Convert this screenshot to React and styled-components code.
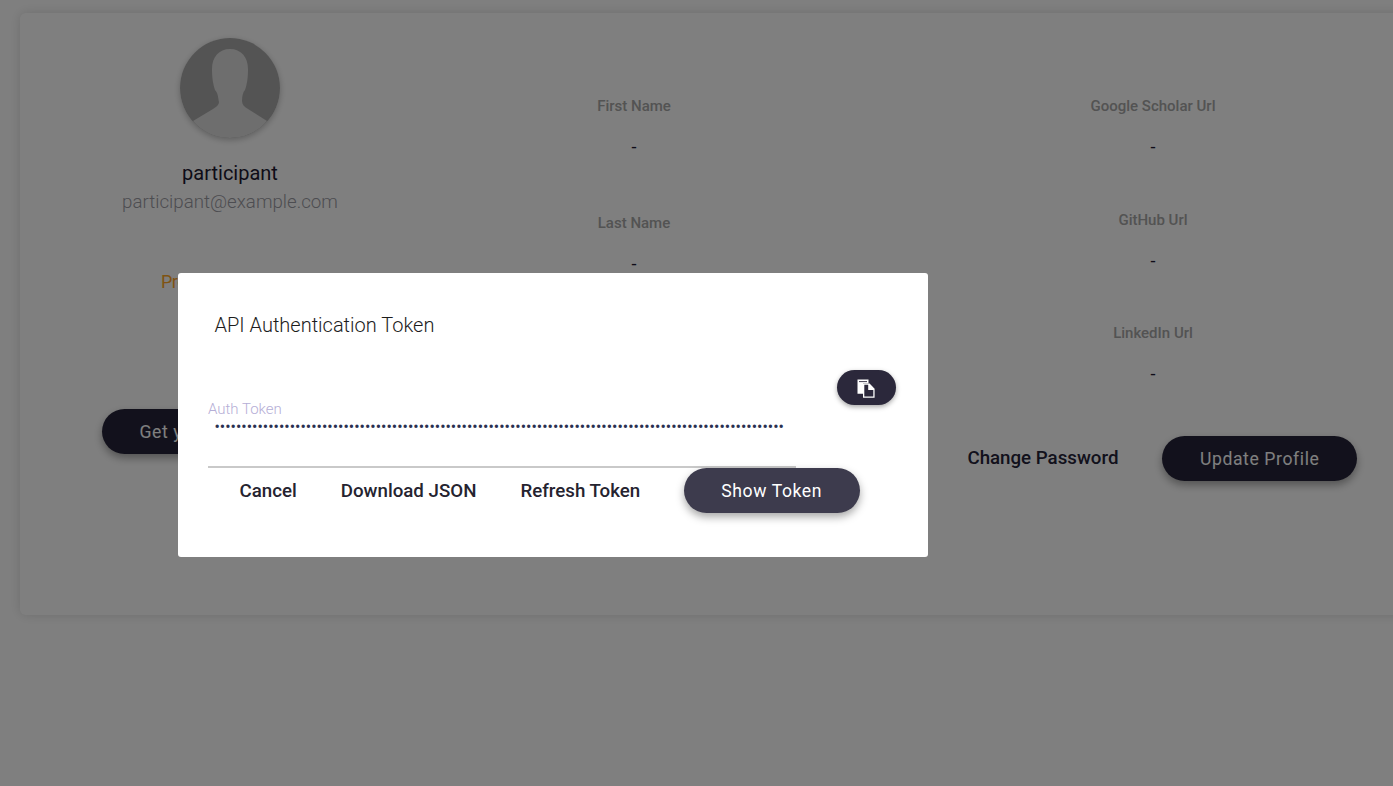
import React from 'react';
import styled, { createGlobalStyle } from 'styled-components';

const GlobalStyle = createGlobalStyle`
  html, body {
    margin: 0;
    padding: 0;
    height: 100%;
    overflow: hidden;
    background: #fff;
    font-family: Roboto, "Liberation Sans", sans-serif;
  }
`;

const Page = styled.div`
  width: 1393px;
  height: 786px;
  overflow: hidden;
  padding: 13px 0 0 20px;
  box-sizing: border-box;
`;

const ProfileCard = styled.div`
  width: 1420px;
  height: 602px;
  background: #fff;
  border-radius: 6px;
  box-shadow: 0 0 12px rgba(0, 0, 0, 0.14);
  display: grid;
  grid-template-columns: 420px 388px 540px;
`;

const UserColumn = styled.div`
  display: flex;
  flex-direction: column;
  align-items: center;
  padding-top: 25px;
`;

const Avatar = styled.div`
  width: 100px;
  height: 100px;
  border-radius: 50%;
  overflow: hidden;
  box-shadow: 0 2px 6px rgba(0, 0, 0, 0.25);
  svg {
    display: block;
  }
`;

const UserName = styled.div`
  margin-top: 23px;
  font-size: 20px;
  line-height: 24px;
  color: #1c1830;
`;

const UserEmail = styled.div`
  margin-top: 5px;
  font-size: 18.72px;
  line-height: 24px;
  font-weight: 300;
  color: #9a9aa2;
`;

const Status = styled.div`
  margin-top: 56px;
  font-size: 18px;
  line-height: 24px;
  letter-spacing: -0.45px;
  color: #ffa726;
`;

const PillButton = styled.button`
  border: 0;
  border-radius: 24px;
  height: 45px;
  padding: 0 37.5px;
  background: ${(p) => p.$bg || '#252338'};
  color: #fff;
  font-family: inherit;
  font-size: 17.6px;
  font-weight: 400;
  letter-spacing: 0.6px;
  white-space: nowrap;
  box-shadow: 0 4px 8px rgba(0, 0, 0, 0.35);
`;

const TokenButton = styled(PillButton)`
  margin-top: 115px;
  min-width: 256px;
  text-align: left;
`;

const FieldColumn = styled.div`
  display: flex;
  flex-direction: column;
  align-items: center;
  padding-top: 84px;
  gap: ${(p) => p.$gap}px;
`;

const SocialColumn = styled(FieldColumn)`
  margin-left: 110px;
`;

const Field = styled.div`
  text-align: center;
  display: flex;
  flex-direction: column;
  gap: 24px;
`;

const FieldLabel = styled.div`
  font-size: 15px;
  line-height: 18px;
  font-weight: 500;
  color: #a6a6a6;
`;

const FieldValue = styled.div`
  font-size: 18px;
  line-height: 15px;
  color: #1c1830;
`;

const ProfileActions = styled.div`
  align-self: flex-end;
  display: flex;
  align-items: center;
  gap: 44px;
  margin-top: -1.5px;
  margin-right: 11px;
`;

const ChangeLink = styled.span`
  font-size: 18.72px;
  font-weight: 500;
  white-space: nowrap;
  padding-bottom: 2px;
  color: #252338;
`;

const Backdrop = styled.div`
  position: fixed;
  inset: 0;
  background: rgba(0, 0, 0, 0.5);
`;

const Dialog = styled.div`
  position: absolute;
  left: 178px;
  top: 273px;
  width: 750px;
  box-sizing: border-box;
  background: #fff;
  border-radius: 3px;
  padding: 40px 32px 44px 30px;
`;

const DialogTitle = styled.h2`
  margin: 0 0 33px 6.5px;
  font-size: 20px;
  line-height: 24px;
  font-weight: 300;
  color: #1c1c1c;
`;

const TokenRow = styled.div`
  display: flex;
  justify-content: space-between;
  align-items: flex-start;
`;

const TokenField = styled.div`
  width: 588px;
  padding-top: 31px;
  border-bottom: 2px solid #c9c9c9;
`;

const TokenLabel = styled.label`
  display: block;
  font-size: 15px;
  line-height: 16px;
  font-weight: 300;
  color: #b5aed6;
`;

const TokenInput = styled.input`
  display: block;
  width: 100%;
  box-sizing: border-box;
  border: 0;
  outline: 0;
  background: transparent;
  margin: 0;
  padding: 1px 6.5px 32px;
  height: 49px;
  font-family: inherit;
  font-size: 15.93px;
  line-height: 16px;
  color: #2a3050;
`;

const CopyButton = styled.button`
  width: 59px;
  height: 35px;
  padding: 0;
  border: 0;
  border-radius: 18px;
  background: #2b283b;
  display: flex;
  align-items: center;
  justify-content: center;
  box-shadow: 0 2px 5px rgba(0, 0, 0, 0.35);
`;

const DialogActions = styled.div`
  display: flex;
  align-items: center;
  padding-left: 9.5px;
`;

const TextButton = styled.button`
  border: 0;
  background: transparent;
  padding: 0 22px;
  height: 45px;
  font-family: inherit;
  font-size: 18.72px;
  font-weight: 500;
  color: #25232f;
  white-space: nowrap;
`;

const ShowButton = styled(PillButton)`
  margin-left: 21.5px;
`;

function CopyIcon() {
  return (
    <svg width="20" height="20" viewBox="0 0 20 20">
      <path d="M0.5 1.5h11v4H6v10.2H0.5z" fill="#fff" />
      <path d="M6 5.5h6.6l5 5.2v9H6z" fill="#fff" />
      <path d="M7.3 6.8v11.6h9V11.9h-5.1V6.8z" fill="#2b283b" />
      <path d="M2 3.6h8" stroke="#2b283b" strokeWidth="0.9" />
    </svg>
  );
}

function Silhouette() {
  return (
    <svg width="100" height="100" viewBox="0 0 100 100">
      <rect width="100" height="100" fill="#a9a9a9" />
      <path
        d="M50 11c-11 0-18 8-18 20 0 9 1 15 3 21 3 3 3 7 4 12 0 3-3 5-6 7L13 83c9 11 22 17 37 17s28-6 37-17L68 71c-4-2-6-5-6-8 0-5 1-9 3-11 2-6 3-12 3-21 0-12-7-20-18-20z"
        fill="#dcdcdc"
      />
    </svg>
  );
}

const token = '•'.repeat(106);

export default function App() {
  return (
    <Page>
      <GlobalStyle />
      <ProfileCard>
        <UserColumn>
          <Avatar>
            <Silhouette />
          </Avatar>
          <UserName>participant</UserName>
          <UserEmail>participant@example.com</UserEmail>
          <Status>Profile Incomplete</Status>
          <TokenButton>Get your Auth Token</TokenButton>
        </UserColumn>
        <FieldColumn $gap={60}>
          <Field>
            <FieldLabel>First Name</FieldLabel>
            <FieldValue>-</FieldValue>
          </Field>
          <Field>
            <FieldLabel>Last Name</FieldLabel>
            <FieldValue>-</FieldValue>
          </Field>
        </FieldColumn>
        <SocialColumn $gap={56.5}>
          <Field>
            <FieldLabel>Google Scholar Url</FieldLabel>
            <FieldValue>-</FieldValue>
          </Field>
          <Field>
            <FieldLabel>GitHub Url</FieldLabel>
            <FieldValue>-</FieldValue>
          </Field>
          <Field>
            <FieldLabel>LinkedIn Url</FieldLabel>
            <FieldValue>-</FieldValue>
          </Field>
          <ProfileActions>
            <ChangeLink>Change Password</ChangeLink>
            <PillButton>Update Profile</PillButton>
          </ProfileActions>
        </SocialColumn>
      </ProfileCard>
      <Backdrop>
        <Dialog>
          <DialogTitle>API Authentication Token</DialogTitle>
          <TokenRow>
            <TokenField>
              <TokenLabel>Auth Token</TokenLabel>
              <TokenInput type="password" readOnly value={token} />
            </TokenField>
            <CopyButton>
              <CopyIcon />
            </CopyButton>
          </TokenRow>
          <DialogActions>
            <TextButton>Cancel</TextButton>
            <TextButton>Download JSON</TextButton>
            <TextButton>Refresh Token</TextButton>
            <ShowButton $bg="#3d3b4d">Show Token</ShowButton>
          </DialogActions>
        </Dialog>
      </Backdrop>
    </Page>
  );
}
